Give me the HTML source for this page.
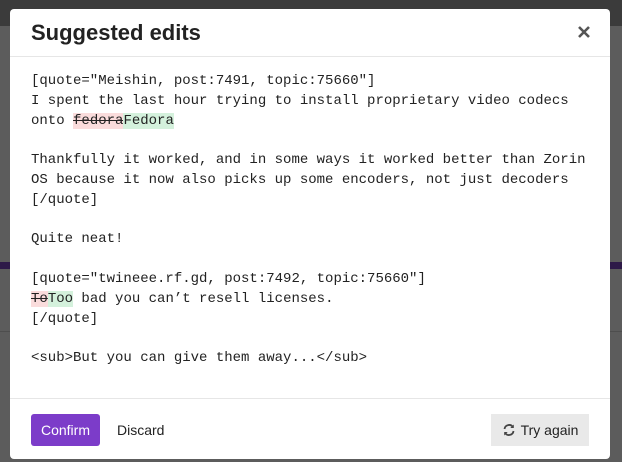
<!DOCTYPE html>
<html><head><style>
html,body{margin:0;padding:0;width:622px;height:462px;overflow:hidden;background:#5c5c5c;font-family:"Liberation Sans",sans-serif;position:relative}
.top{position:absolute;left:0;top:0;width:622px;height:26px;background:#3b3b3b}
.bar{position:absolute;left:0;top:262px;width:622px;height:7px;background:#2e1a48}
.line{position:absolute;left:0;top:331px;width:622px;height:1px;background:#4e4e4e}
.modal{position:absolute;left:10px;top:9px;width:600px;height:450px;background:#fff;border-radius:4px}
h1{position:absolute;left:21px;top:11px;margin:0;font-size:22px;font-weight:bold;color:#222}
.x{position:absolute;left:567px;top:16px;}
.hb{position:absolute;left:0;top:47px;width:600px;height:1px;background:#e6e6e6}
pre{position:absolute;left:21px;top:63px;margin:0;font-family:"Liberation Mono",monospace;font-size:14px;line-height:19.8px;color:#222}
del{background:#fadcdc;text-decoration:line-through}
ins{background:#d4f1dc;text-decoration:none}
.fb{position:absolute;left:0;top:389px;width:600px;height:1px;background:#e6e6e6}
.btn{position:absolute;top:405px;height:32px;line-height:32px;font-size:14px}
.c{left:21px;width:69px;background:#7c3cc9;color:#fff;border-radius:3px;text-align:center}
.d{left:107px;color:#222}
.t{left:481px;width:98px;background:#e9e9e9;color:#222;text-align:center}
</style></head><body>
<div class="top"></div><div class="bar"></div><div class="line"></div>
<div class="modal">
<h1>Suggested edits</h1>
<svg class="x" width="14" height="14" viewBox="0 0 14 14"><path d="M2 2L12 12M12 2L2 12" stroke="#555" stroke-width="2.6"/></svg>
<div class="hb"></div>
<pre>[quote="Meishin, post:7491, topic:75660"]
I spent the last hour trying to install proprietary video codecs
onto <del>fedora</del><ins>Fedora</ins>

Thankfully it worked, and in some ways it worked better than Zorin
OS because it now also picks up some encoders, not just decoders
[/quote]

Quite neat!

[quote="twineee.rf.gd, post:7492, topic:75660"]
<del>To</del><ins>Too</ins> bad you can’t resell licenses.
[/quote]

&lt;sub&gt;But you can give them away...&lt;/sub&gt;</pre>
<div class="fb"></div>
<div class="btn c">Confirm</div>
<div class="btn d">Discard</div>
<div class="btn t"><svg width="14" height="14" viewBox="0 0 14 14" style="vertical-align:-2px;margin-right:5px"><path d="M2.5 6A4.6 4.6 0 0 1 11 4.2M11.5 8A4.6 4.6 0 0 1 3 9.8" fill="none" stroke="#444" stroke-width="1.8"/><path d="M11.8 1.5V5H8.3z M2.2 12.5V9h3.5z" fill="#444"/></svg>Try again</div>
</div>
</body></html>
